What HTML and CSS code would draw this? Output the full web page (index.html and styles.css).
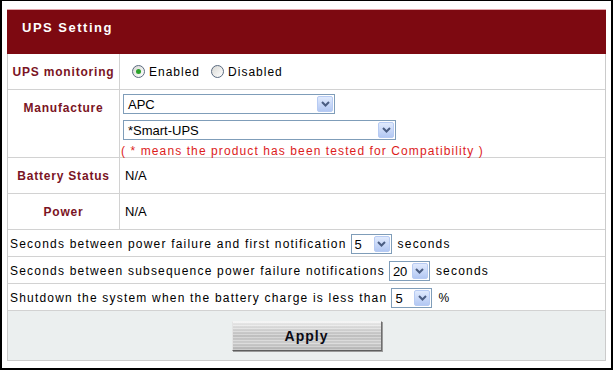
FILE: index.html
```html
<!DOCTYPE html>
<html lang="en">

<head>
    <meta charset="UTF-8">
    <title>UPS Setting</title>
    <link rel="stylesheet" href="styles.css">
</head>

<body>
    <div class="frame">
        <div class="panel">
            <div class="panel-title">UPS Setting</div>

            <div class="panel-body">
                <div class="row">
                    <div class="label">UPS monitoring</div>
                    <div class="value">
                        <label class="radio"><span class="radio-dot checked"></span>Enabled</label>
                        <label class="radio"><span class="radio-dot"></span>Disabled</label>
                    </div>
                </div>

                <div class="row row-tall">
                    <div class="label label-top">Manufacture</div>
                    <div class="value value-stack">
                        <div class="dropdown dd-brand">
                            <span class="dd-text">APC</span>
                            <span class="dd-arrow"><svg width="9" height="6" viewBox="0 0 9 6"><path d="M1 1 L4.5 4.5 L8 1" fill="none" stroke="#4a5d82" stroke-width="2"/></svg></span>
                        </div>
                        <div class="dropdown dd-model">
                            <span class="dd-text">*Smart-UPS</span>
                            <span class="dd-arrow"><svg width="9" height="6" viewBox="0 0 9 6"><path d="M1 1 L4.5 4.5 L8 1" fill="none" stroke="#4a5d82" stroke-width="2"/></svg></span>
                        </div>
                        <div class="note">( * means the product has been tested for Compatibility )</div>
                    </div>
                </div>

                <div class="row">
                    <div class="label">Battery Status</div>
                    <div class="value plain">N/A</div>
                </div>

                <div class="row">
                    <div class="label">Power</div>
                    <div class="value plain">N/A</div>
                </div>

                <div class="line-row">
                    <span>Seconds between power failure and first notification</span>
                    <div class="dropdown dd-small">
                        <span class="dd-text">5</span>
                        <span class="dd-arrow"><svg width="9" height="6" viewBox="0 0 9 6"><path d="M1 1 L4.5 4.5 L8 1" fill="none" stroke="#4a5d82" stroke-width="2"/></svg></span>
                    </div>
                    <span>seconds</span>
                </div>

                <div class="line-row">
                    <span>Seconds between subsequence power failure notifications</span>
                    <div class="dropdown dd-small">
                        <span class="dd-text">20</span>
                        <span class="dd-arrow"><svg width="9" height="6" viewBox="0 0 9 6"><path d="M1 1 L4.5 4.5 L8 1" fill="none" stroke="#4a5d82" stroke-width="2"/></svg></span>
                    </div>
                    <span>seconds</span>
                </div>

                <div class="line-row">
                    <span>Shutdown the system when the battery charge is less than</span>
                    <div class="dropdown dd-small">
                        <span class="dd-text">5</span>
                        <span class="dd-arrow"><svg width="9" height="6" viewBox="0 0 9 6"><path d="M1 1 L4.5 4.5 L8 1" fill="none" stroke="#4a5d82" stroke-width="2"/></svg></span>
                    </div>
                    <span>%</span>
                </div>

                <div class="actions">
                    <button class="apply-btn">Apply</button>
                </div>
            </div>
        </div>
    </div>
</body>

</html>
```

FILE: styles.css
```css
* {
    margin: 0;
    padding: 0;
    box-sizing: border-box;
}

html,
body {
    width: 613px;
    height: 370px;
    background: #fff;
    font-family: "Liberation Sans", Arial, sans-serif;
    font-size: 12px;
    color: #000;
}

.frame {
    width: 613px;
    height: 370px;
    border: 2px solid #000;
    border-top-width: 1px;
    padding: 8px 5px 0 5px;
}

.panel {
    width: 599px;
}

/* maroon title bar */
.panel-title {
    height: 45px;
    background-color: #7d0911;
    border-top: 1px solid #e3a7ad;
    color: #fff;
    font-size: 13px;
    font-weight: bold;
    letter-spacing: 1.5px;
    line-height: 16px;
    padding: 10px 0 0 15px;
}

.panel-body {
    border: 1px solid #cbcbcb;
    border-top: 0;
}

.row {
    display: grid;
    grid-template-columns: 112px 1fr;
    height: 36px;
    border-bottom: 1px solid #d2d2d2;
}

.row-tall {
    height: 68px;
}

.label {
    display: flex;
    align-items: center;
    justify-content: center;
    border-right: 1px solid #d2d2d2;
    color: #7a1424;
    font-weight: bold;
    letter-spacing: 0.8px;
}

.label-top {
    align-items: flex-start;
    padding-top: 11px;
    line-height: 14px;
}

.value {
    display: flex;
    align-items: center;
    padding-left: 3px;
    letter-spacing: 1px;
}

.value.plain {
    font-size: 13px;
    letter-spacing: 0;
    padding-left: 5px;
}

.value-stack {
    flex-direction: column;
    align-items: flex-start;
    padding-top: 4px;
    gap: 6px;
}

/* radio buttons */
.radio {
    display: flex;
    align-items: center;
    gap: 4px;
    margin-left: 9px;
}

.radio + .radio {
    margin-left: 11px;
}

.radio-dot {
    width: 13px;
    height: 13px;
    border: 1px solid #5a6a80;
    border-radius: 50%;
    background: linear-gradient(135deg, #d8d8d4, #ffffff);
    display: flex;
    align-items: center;
    justify-content: center;
}

.radio-dot.checked::after {
    content: "";
    width: 5px;
    height: 5px;
    border-radius: 50%;
    background: #2aa22a;
}

/* select look-alike */
.dropdown {
    display: inline-flex;
    align-items: center;
    height: 20px;
    border: 1px solid #7f9db9;
    background: #fff;
    font-size: 13px;
    letter-spacing: 0;
}

.dd-text {
    flex-grow: 1;
    padding-left: 4px;
}

.dd-arrow {
    width: 16px;
    height: 16px;
    margin: 1px;
    border: 1px solid #b7cbf3;
    border-radius: 2px;
    background: linear-gradient(to bottom, #e0eafd, #b3c8f3);
    display: flex;
    align-items: center;
    justify-content: center;
}

.dd-brand {
    width: 212px;
}

.dd-model {
    width: 273px;
}

.dd-small {
    width: 41px;
    margin: 0 6px 0 4px;
}

.dd-small .dd-text {
    padding-left: 3px;
}

.note {
    margin-top: -2px;
    margin-left: -2px;
    line-height: 14px;
    color: #dc1c1c;
    letter-spacing: 1.1px;
}

.line-row {
    display: flex;
    align-items: center;
    height: 27px;
    padding: 2px 0 0 2px;
    border-bottom: 1px solid #d2d2d2;
    letter-spacing: 1.2px;
}

.actions {
    display: flex;
    justify-content: center;
    height: 49px;
    padding-top: 10px;
    background-color: #ebefef;
}

.apply-btn {
    width: 150px;
    height: 30px;
    font-family: "Liberation Sans", Arial, sans-serif;
    font-size: 14px;
    font-weight: bold;
    letter-spacing: 1px;
    color: #0a0a14;
    border: 1px solid;
    border-color: #f4f4f4 #6e6e6e #5e5e5e #e4e4e4;
    box-shadow: 1px 1px 0 #9a9a9a;
    background:
        repeating-linear-gradient(to bottom, rgba(255, 255, 255, 0.25) 0 1px, rgba(0, 0, 0, 0.04) 1px 3px),
        linear-gradient(to bottom, #f2f2f2 0%, #dadada 25%, #c6c6c6 50%, #d4d4d4 75%, #b8b8b8 100%);
    cursor: pointer;
}
```
